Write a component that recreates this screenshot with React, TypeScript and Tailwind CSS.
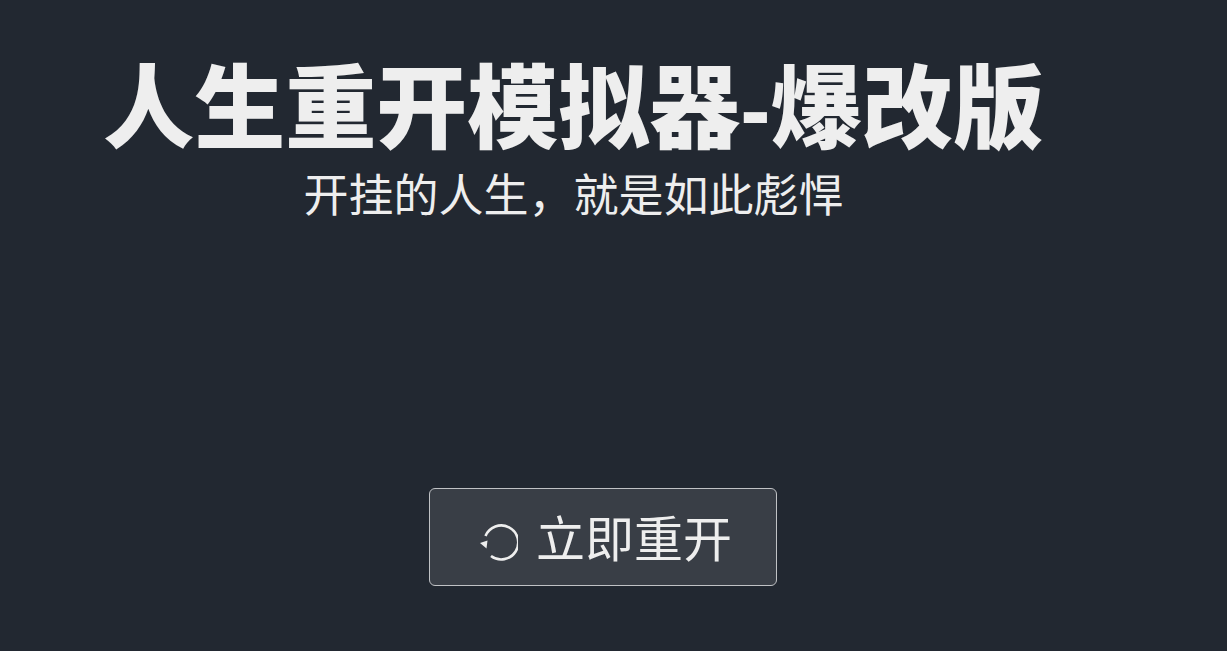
export default function App() {
  return (
    <div className="flex h-[651px] w-full flex-col overflow-hidden bg-[#222831] font-['Liberation_Sans','Noto_Sans_CJK_SC',sans-serif] text-[#eeeeee]">
      <div className="flex w-[1147px] flex-col items-center pt-[54px]">
        <h1 className="text-[91px] font-black leading-[112px]">人生重开模拟器-爆改版</h1>
        <p className="mt-[4px] text-[45px] leading-[54px]">开挂的人生，就是如此彪悍</p>
      </div>
      <div className="mt-[264px] flex justify-center">
        <button className="ml-[-21px] flex h-[98px] w-[348px] items-center justify-center gap-[18px] rounded-[6px] border border-[#c0c2c5] bg-[#393e46] pl-[4px] pt-[7px] text-[49px]">
          <svg className="mt-[4px]" width="40" height="40" viewBox="0 0 40 40" fill="none" stroke="currentColor" strokeWidth="2.6">
            <path d="M7.5 13A17 17 0 1 1 13 33" />
            <path d="M2 20l7.5-2.5-1 8z" fill="currentColor" stroke="none" />
          </svg>
          立即重开
        </button>
      </div>
    </div>
  );
}
